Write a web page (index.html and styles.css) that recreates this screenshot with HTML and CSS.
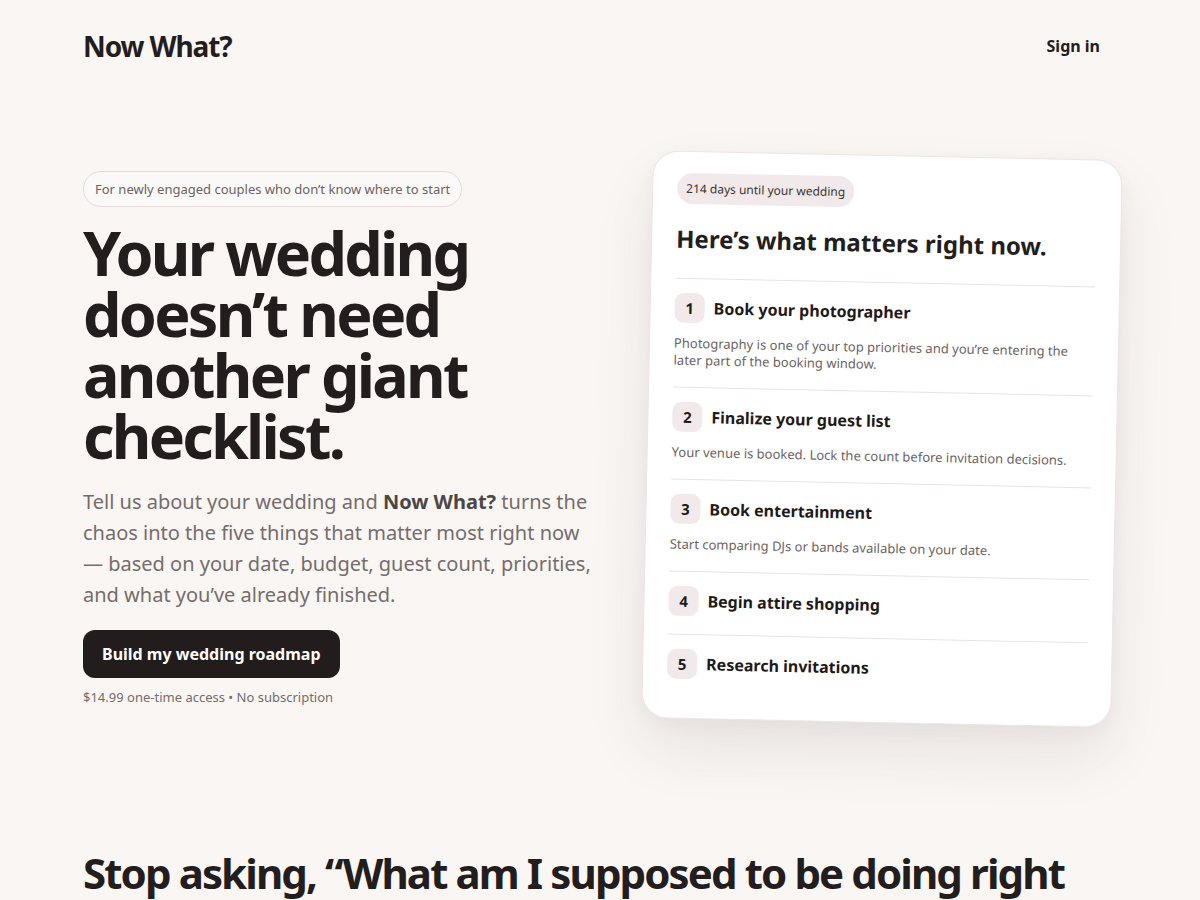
FILE: index.html
```html
<!DOCTYPE html>
<html lang="en">
<head>
  <meta charset="UTF-8" />
  <title>Now What? — Your wedding roadmap</title>
  <link rel="stylesheet" href="styles.css">
</head>
<body>

  <header class="site-header">
    <a class="logo" href="#">Now What?</a>
    <a class="sign-in" href="#">Sign in</a>
  </header>

  <main>
    <section class="hero">
      <div class="hero-copy">
        <span class="eyebrow">For newly engaged couples who don’t know where to start</span>
        <h1>Your wedding doesn’t need another giant checklist.</h1>
        <p class="lead">
          Tell us about your wedding and <strong>Now What?</strong> turns the chaos into the five things that matter most right now — based on your date, budget, guest count, priorities, and what you’ve already finished.
        </p>
        <a class="cta" href="#">Build my wedding roadmap</a>
        <p class="price">$14.99 one-time access • No subscription</p>
      </div>

      <div class="preview-card">
        <span class="countdown">214 days until your wedding</span>
        <h2>Here’s what matters right now.</h2>
        <ol class="tasks">
          <li>
            <div class="task-head"><span class="num">1</span>Book your photographer</div>
            <p>Photography is one of your top priorities and you’re entering the later part of the booking window.</p>
          </li>
          <li>
            <div class="task-head"><span class="num">2</span>Finalize your guest list</div>
            <p>Your venue is booked. Lock the count before invitation decisions.</p>
          </li>
          <li>
            <div class="task-head"><span class="num">3</span>Book entertainment</div>
            <p>Start comparing DJs or bands available on your date.</p>
          </li>
          <li>
            <div class="task-head"><span class="num">4</span>Begin attire shopping</div>
          </li>
          <li>
            <div class="task-head"><span class="num">5</span>Research invitations</div>
          </li>
        </ol>
      </div>
    </section>

    <section class="problem">
      <h2>Stop asking, “What am I supposed to be doing right now?”</h2>
    </section>
  </main>

</body>
</html>
```

FILE: styles.css
```css
* {
  box-sizing: border-box;
}

body {
  font-family: "Noto Sans", sans-serif;
  background: #f9f6f4;
  color: #231d1d;
  margin: 0;
  padding: 0;
}

a {
  color: inherit;
  text-decoration: none;
}

.site-header,
main {
  max-width: 1034px;
  margin: 0 auto;
}

.site-header {
  display: flex;
  justify-content: space-between;
  align-items: center;
  height: 92px;
  padding-right: 17px;
}

.logo {
  font-size: 28px;
  font-weight: 700;
  letter-spacing: -0.04em;
}

.sign-in {
  font-size: 16px;
  font-weight: 700;
}

.hero {
  display: grid;
  grid-template-columns: 1fr 470px;
  gap: 50px;
  align-items: start;
  padding-top: 60px;
}

.hero-copy {
  padding-top: 19px;
}

.eyebrow {
  display: inline-block;
  padding: 8px 11px;
  font-size: 13px;
  color: #6b6262;
  border: 1px solid #e4dcdb;
  border-radius: 999px;
  background: #fbf9f8;
}

h1 {
  font-size: 61px;
  line-height: 61px;
  font-weight: 700;
  letter-spacing: -0.045em;
  margin: 15px 0 20px;
  max-width: 410px;
}

.lead {
  font-size: 20px;
  line-height: 31px;
  color: #766c6c;
  margin: 0 0 20px;
}

.lead strong {
  color: #4e4545;
}

.cta {
  display: inline-block;
  background: #221c1c;
  color: white;
  font-size: 16px;
  font-weight: 700;
  padding: 13px 19px;
  border-radius: 12px;
}

.price {
  font-size: 13px;
  color: #756c6c;
  margin: 10px 0 0;
}

.preview-card {
  background: white;
  border: 1px solid #ece5e4;
  border-radius: 26px;
  padding: 21px 24px 21px;
  margin-top: 3px;
  transform: rotate(1.2deg);
  box-shadow: 0 30px 60px rgba(70, 40, 40, 0.09), 0 6px 18px rgba(70, 40, 40, 0.04);
}

.countdown {
  display: inline-block;
  background: #f2eaea;
  color: #3a3232;
  font-size: 12px;
  padding: 7px 9px;
  border-radius: 999px;
}

.preview-card h2 {
  font-size: 24px;
  font-weight: 700;
  margin: 18px 0 23px;
}

.tasks {
  list-style: none;
  margin: 0;
  padding: 0;
}

.tasks li {
  border-top: 1px solid #e9e3e2;
  padding: 14px 0 18px;
}

.task-head {
  display: flex;
  align-items: center;
  gap: 9px;
  font-size: 16px;
  font-weight: 700;
  color: #1f1a1a;
}

.num {
  display: inline-flex;
  align-items: center;
  justify-content: center;
  width: 30px;
  height: 30px;
  background: #f2eaea;
  border-radius: 9px;
  font-size: 15px;
}

.tasks p {
  font-size: 13px;
  line-height: 17px;
  color: #6b6363;
  margin: 12px 0 0;
}

.problem {
  padding-top: 127px;
}

.problem h2 {
  font-size: 42px;
  font-weight: 700;
  letter-spacing: -0.045em;
  line-height: 1.1;
  margin: 0;
}
```
